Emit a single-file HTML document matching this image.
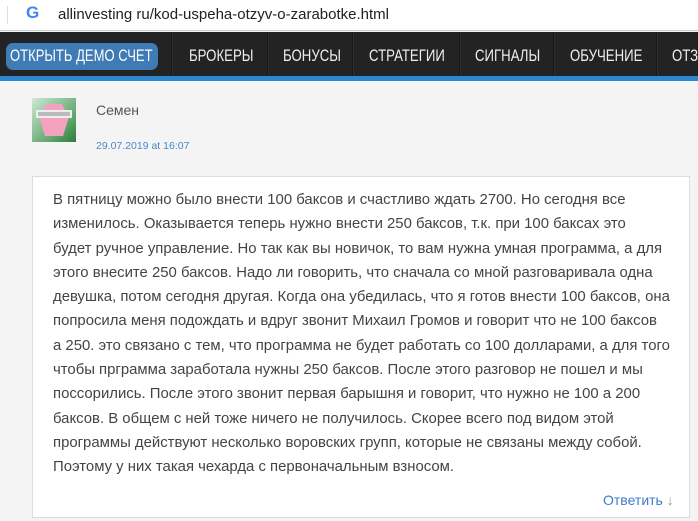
<!DOCTYPE html>
<html><head><meta charset="utf-8"><style>
*{margin:0;padding:0;box-sizing:border-box}
body{width:698px;height:521px;overflow:hidden;background:#f4f4f4;font-family:"Liberation Sans",sans-serif;position:relative}
.addr{position:absolute;left:0;top:0;width:698px;height:31px;background:#fff;border-bottom:1px solid #ccc}
.addr .sep{position:absolute;left:7px;top:6px;width:1px;height:18px;background:#ddd}
.addr .g{position:absolute;left:26px;top:3px;font-size:17px;font-weight:bold;color:#4285f4}
.addr .url{position:absolute;left:58px;top:6px;font-size:15px;color:#222}
.nav{position:absolute;left:0;top:32px;width:698px;height:49px;background:#232323;border-bottom:5px solid #2f86cf}
.nav div{position:absolute;top:0;height:44px;line-height:48px;color:#eee;font-size:16.5px;white-space:nowrap;transform:scaleX(.8);transform-origin:left}
.nav div.v{width:2px;height:44px;background:#181818;border-right:1px solid #2e2e2e;transform:none}
.btn{position:absolute;left:6px;top:43px;width:152px;height:27px;background:#3f7bb5;border-radius:7px;color:#fff;font-size:16.5px;line-height:27px;white-space:nowrap;overflow:hidden}
.btn span{display:inline-block;transform:scaleX(.79);transform-origin:left;margin-left:4px}
.av{position:absolute;left:32px;top:98px;width:44px;height:44px;background:linear-gradient(135deg,#cfe8d4,#5da46a 70%,#2e7a3c)}
.av .f{position:absolute;left:7px;top:6px;width:30px;height:32px;background:#f3a3c0;clip-path:polygon(25% 0,75% 0,100% 40%,80% 100%,20% 100%,0 40%)}
.av .gl{position:absolute;left:4px;top:12px;width:36px;height:8px;border:2px solid #eee;background:#bbb}
.name{position:absolute;left:96px;top:102px;font-size:14px;color:#555}
.date{position:absolute;left:96px;top:140px;font-size:10.5px;color:#4a88c8}
.box{position:absolute;left:32px;top:176px;width:658px;height:342px;background:#fff;border:1px solid #ddd}
.txt{position:absolute;left:53px;top:188px;font-size:14.9px;line-height:24.3px;color:#444;white-space:nowrap}
.reply{position:absolute;left:603px;top:492px;font-size:14px;color:#3f7bc9}
.reply span{color:#999}
</style></head><body>
<div class="addr"><div class="sep"></div><div class="g">G</div><div class="url">allinvesting ru/kod-uspeha-otzyv-o-zarabotke.html</div></div>
<div class="nav">
<div class="v" style="left:171px"></div>
<div style="left:189px">БРОКЕРЫ</div>
<div class="v" style="left:267px"></div>
<div style="left:283px">БОНУСЫ</div>
<div class="v" style="left:352px"></div>
<div style="left:369px">СТРАТЕГИИ</div>
<div class="v" style="left:459px"></div>
<div style="left:475px">СИГНАЛЫ</div>
<div class="v" style="left:553px"></div>
<div style="left:570px">ОБУЧЕНИЕ</div>
<div class="v" style="left:656px"></div>
<div style="left:672px">ОТЗ</div>
</div>
<div class="btn"><span>ОТКРЫТЬ ДЕМО СЧЕТ</span></div>
<div class="av"><div class="f"></div><div class="gl"></div></div>
<div class="name">Семен</div>
<div class="date">29.07.2019 at 16:07</div>
<div class="box"></div>
<div class="txt">
В пятницу можно было внести 100 баксов и счастливо ждать 2700. Но сегодня все<br>
изменилось. Оказывается теперь нужно внести 250 баксов, т.к. при 100 баксах это<br>
будет ручное управление. Но так как вы новичок, то вам нужна умная программа, а для<br>
этого внесите 250 баксов. Надо ли говорить, что сначала со мной разговаривала одна<br>
девушка, потом сегодня другая. Когда она убедилась, что я готов внести 100 баксов, она<br>
попросила меня подождать и вдруг звонит Михаил Громов и говорит что не 100 баксов<br>
а 250. это связано с тем, что программа не будет работать со 100 долларами, а для того<br>
чтобы прграмма заработала нужны 250 баксов. После этого разговор не пошел и мы<br>
поссорились. После этого звонит первая барышня и говорит, что нужно не 100 а 200<br>
баксов. В общем с ней тоже ничего не получилось. Скорее всего под видом этой<br>
программы действуют несколько воровских групп, которые не связаны между собой.<br>
Поэтому у них такая чехарда с первоначальным взносом.
</div>
<div class="reply">Ответить <span>↓</span></div>
</body></html>
